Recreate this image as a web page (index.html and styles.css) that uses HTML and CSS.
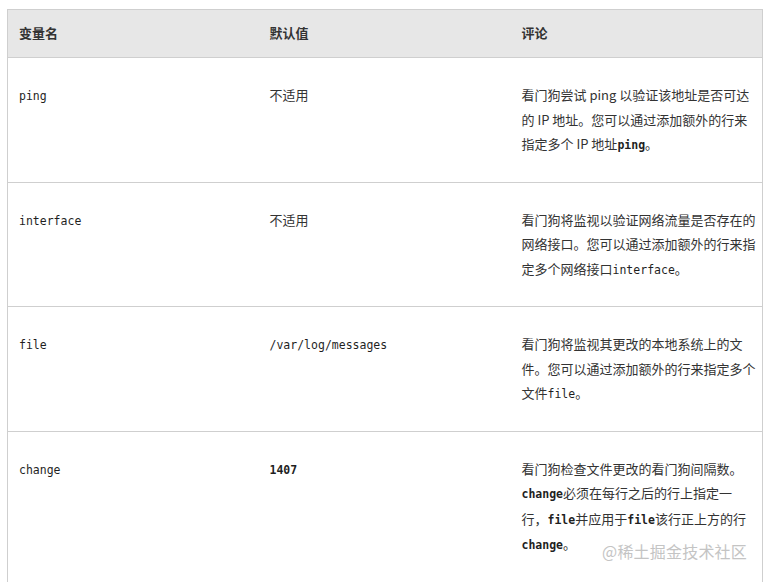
FILE: index.html
```html
<!DOCTYPE html>
<html lang="zh-CN">
<head>
<meta charset="utf-8">
<title>watchdog</title>
<link rel="stylesheet" href="styles.css">
</head>
<body>
<div class="wrap">
  <table class="tbl">
    <colgroup>
      <col class="c1"><col class="c2"><col class="c3">
    </colgroup>
    <thead>
      <tr><th>变量名</th><th>默认值</th><th class="last">评论</th></tr>
    </thead>
    <tbody>
      <tr>
        <td><code>ping</code></td>
        <td>不适用</td>
        <td class="last">看门狗尝试 ping 以验证该地址是否可达的 IP 地址。您可以通过添加额外的行来指定多个 IP 地址<code class="b">ping</code>。</td>
      </tr>
      <tr>
        <td><code>interface</code></td>
        <td>不适用</td>
        <td class="last">看门狗将监视以验证网络流量是否存在的网络接口。您可以通过添加额外的行来指定多个网络接口<code>interface</code>。</td>
      </tr>
      <tr>
        <td><code>file</code></td>
        <td><code>/var/log/messages</code></td>
        <td class="last">看门狗将监视其更改的本地系统上的文件。您可以通过添加额外的行来指定多个文件<code>file</code>。</td>
      </tr>
      <tr>
        <td><code>change</code></td>
        <td><code class="b">1407</code></td>
        <td class="last">看门狗检查文件更改的看门狗间隔数。<code class="b">change</code>必须在每行之后的行上指定一<br>行，<code class="b">file</code>并应用于<code class="b">file</code>该行正上方的行<code class="b">change</code>。</td>
      </tr>
    </tbody>
  </table>
  <div class="mark">@稀土掘金技术社区</div>
</div>
</body>
</html>
```
FILE: styles.css
```css
html, body {
  margin: 0;
  padding: 0;
  background: #ffffff;
}
body {
  font-family: "Noto Sans CJK SC", "Noto Sans", sans-serif;
  font-size: 13px;
  color: #333333;
}
.wrap {
  position: relative;
  padding: 9px 3px 0 7px;
}
.tbl {
  width: 755px;
  border-collapse: collapse;
  table-layout: fixed;
  border: 1px solid #cfcfcf;
}
.c1 { width: 251px; }
.c2 { width: 252px; }
.c3 { width: 252px; }
.tbl th {
  background: #e7e7e7;
  font-weight: bold;
  text-align: left;
  padding: 10px 11px 12px 11px;
  line-height: 25px;
  color: #333333;
  border-bottom: 1px solid #cfcfcf;
}
.tbl td {
  vertical-align: top;
  padding: 25px 11px 24px 11px;
  line-height: 24.5px;
  border-bottom: 1px solid #cfcfcf;
}
.tbl .last {
  padding-right: 3px;
}
code {
  font-family: "DejaVu Sans Mono", "Liberation Mono", monospace;
  font-size: 11.5px;
  color: #1f1f1f;
}
code.b {
  font-weight: bold;
}
.mark {
  position: absolute;
  right: 18px;
  bottom: 20px;
  font-size: 16px;
  color: #c4c4c4;
  letter-spacing: 0.2px;
}
```
